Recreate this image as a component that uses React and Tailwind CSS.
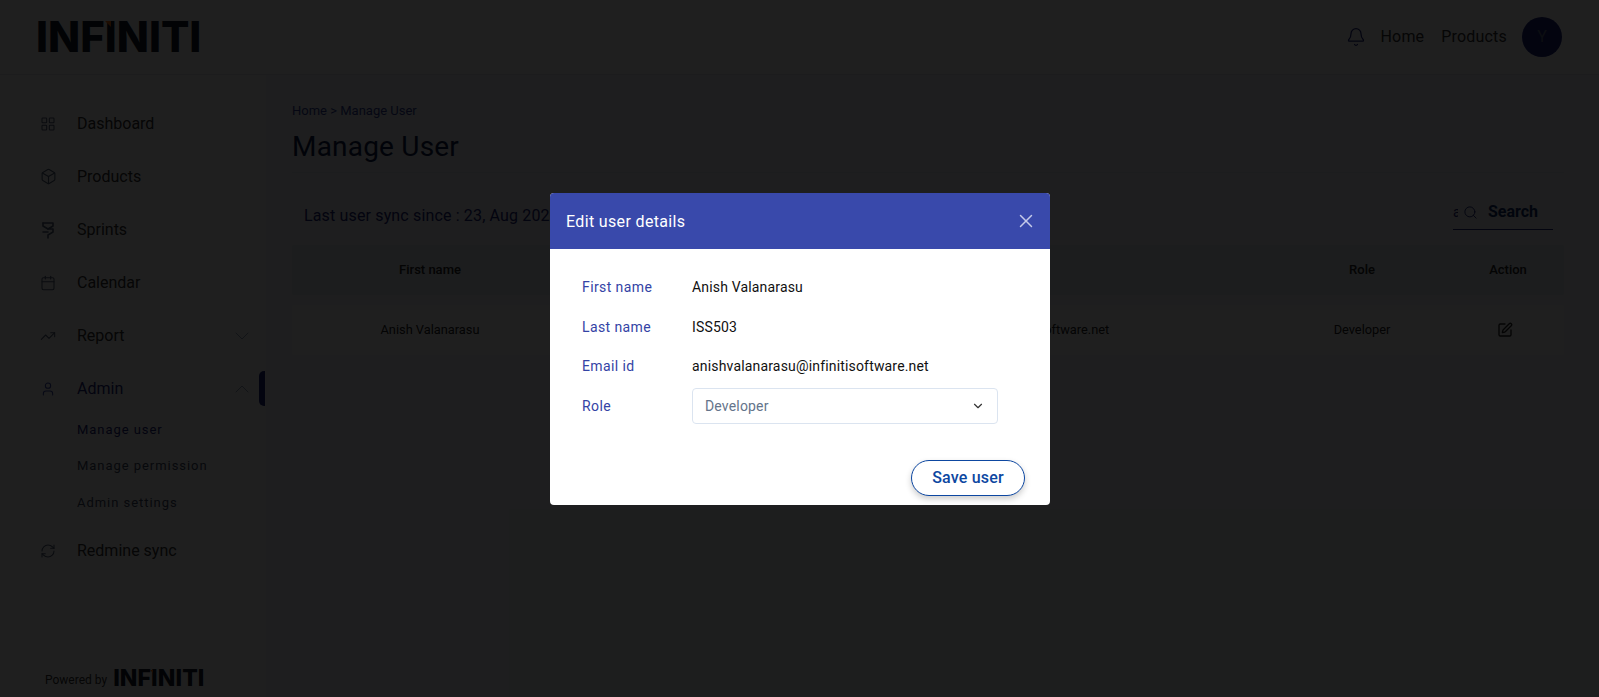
import React from "react";
import { LayoutGrid, Box, Calendar, TrendingUp, User, RefreshCw, Bell, Search, SquarePen, X, ChevronDown, ChevronUp } from "lucide-react";

function Logo({ small }) {
  return (
    <span className={small ? "relative inline-block font-['Inter',sans-serif] font-extrabold text-[23px] leading-[20px] tracking-[0.1px] text-[#101828]" : "relative inline-block font-['Inter',sans-serif] font-extrabold text-[42px] leading-[42px] tracking-[0px] text-[#101828]"}>
      INFINITI
      <span className={small ? "absolute left-[37px] top-[2px] h-0 w-0 border-l-[3px] border-t-[3px] border-l-transparent border-t-[#f97316]" : "absolute left-[69px] top-[5px] h-0 w-0 border-l-[6px] border-t-[6px] border-l-transparent border-t-[#f97316]"} />
    </span>
  );
}

function SprintIcon(props) {
  return (
    <svg width="16" height="18" viewBox="0 0 16 18" fill="none" stroke="currentColor" strokeWidth="1.4" strokeLinejoin="round" strokeLinecap="round" {...props}>
      <path d="M3 2h10v3l-5 3 5 0v3l-5 3v3" />
      <path d="M3 2v3l5 3" />
      <path d="M3 11h5" />
    </svg>
  );
}

function NavItem({ icon: Icon, label, active, chevron, size = 16 }) {
  return (
    <div className={`relative flex h-[53px] items-center pr-[12px] ${active ? "text-[#1a237e]" : "text-[#333333]"}`}>
      <span className="flex w-[61px] shrink-0 justify-center pl-[35px]">
        <span className="flex w-[26px] justify-center">
          <Icon size={size} strokeWidth={1.6} className={active ? "text-[#3949ab]" : "text-[#52607a]"} />
        </span>
      </span>
      <span className="ml-[16px] flex-1 text-[16px]">{label}</span>
      {chevron === "down" && <ChevronDown size={24} strokeWidth={1} className="text-[#94a3b8]" />}
      {chevron === "up" && <ChevronUp size={24} strokeWidth={1} className="text-[#94a3b8]" />}
      {active && <span className="absolute right-[1px] top-[9px] h-[35px] w-[6px] rounded-l-[5px] bg-[#1a237e]" />}
    </div>
  );
}

function SubItem({ label, active }) {
  return (
    <div className={`flex h-[36.5px] items-center pl-[77px] text-[13px] tracking-[0.95px] ${active ? "text-[#1a237e]" : "text-[#3f4a66]"}`}>
      {label}
    </div>
  );
}

function Row({ label, children }) {
  return (
    <div className="flex h-[39.5px] items-center">
      <div className="w-[110px] text-[14px] tracking-[0.4px] text-[#3443a5]">{label}</div>
      <div className="flex-1 text-[14px] tracking-[0.17px] text-[#111111]">{children}</div>
    </div>
  );
}

export default function App() {
  return (
    <div className="relative flex h-[697px] w-[1599px] flex-col overflow-hidden bg-white font-['Roboto',sans-serif]">
      <header className="flex h-[75px] shrink-0 items-center justify-between border-b border-[#e5e7eb] pl-[36px] pr-[37px]">
        <Logo />
        <div className="flex items-center">
          <Bell size={20} strokeWidth={1.5} className="text-[#1a237e]" />
          <span className="ml-[15px] text-[16px] tracking-[0.15px] text-[#333333]">Home</span>
          <span className="ml-[17px] text-[16px] tracking-[0.2px] text-[#333333]">Products</span>
          <span className="ml-[15px] flex h-[40px] w-[40px] items-center justify-center rounded-full bg-[#1a237e] text-[16px] text-[#64748b]">Y</span>
        </div>
      </header>

      <div className="flex min-h-0 flex-1">
        <aside className="relative flex w-[266px] shrink-0 flex-col pt-[22px]">
          <NavItem icon={LayoutGrid} label="Dashboard" />
          <NavItem icon={Box} label="Products" size={17} />
          <NavItem icon={SprintIcon} label="Sprints" />
          <NavItem icon={Calendar} label="Calendar" />
          <NavItem icon={TrendingUp} label="Report" chevron="down" />
          <NavItem icon={User} label="Admin" active chevron="up" />
          <div className="-mt-[4px]">
            <SubItem label="Manage user" active />
            <SubItem label="Manage permission" />
            <SubItem label="Admin settings" />
          </div>
          <div className="mt-[4px]">
            <NavItem icon={RefreshCw} label="Redmine sync" />
          </div>
          <div className="mt-auto mb-[9px] flex items-end pl-[45px]">
            <span className="text-[12px] leading-[16px] text-[#333333]">Powered by</span>
            <span className="ml-[6px] flex"><Logo small /></span>
          </div>
        </aside>

        <main className="min-w-0 flex-1 bg-[#f3f6f9] pl-[26px] pr-[35px] pt-[28px]">
          <div className="text-[13px] leading-[16px] text-[#303f9f]">Home &gt; Manage User</div>
          <h1 className="mt-[10px] border-b border-[#e2e8f0] pb-[7px] text-[28px] leading-[36px] tracking-[0.2px] text-[#0f1a4a]">Manage User</h1>
          <div className="mt-[22px] flex h-[35px] items-center justify-between pl-[12px] pr-[11px]">
            <span className="pt-[6px] text-[16px] tracking-[0.15px] text-[#1a237e]">Last user sync since : 23, Aug 2023</span>
            <div className="flex h-[35px] w-[100px] items-center border-b border-[#1a237e]">
              <span className="w-[5px] overflow-hidden text-[14px] text-[#1a237e]">a</span>
              <Search size={15} strokeWidth={1.5} className="ml-[5px] text-[#1a237e]" />
              <span className="ml-[10px] text-[16px] font-bold text-[#0d2a6b]">Search</span>
            </div>
          </div>
          <div className="mt-[15px] flex h-[50px] items-center rounded-[2px] bg-[#e4eaf2] text-center text-[13px] font-medium text-[#222222]">
            <div className="w-[276px]">First name</div>
            <div className="w-[250px]">Last name</div>
            <div className="w-[372px]">Email id</div>
            <div className="flex-1" />
            <div className="w-[180px]">Role</div>
            <div className="w-[112px]">Action</div>
          </div>
          <div className="mt-[10px] flex h-[50px] items-center rounded-[2px] bg-white text-center text-[12.8px] text-[#222222]">
            <div className="w-[276px]">Anish Valanarasu</div>
            <div className="w-[250px]">ISS503</div>
            <div className="w-[372px] whitespace-nowrap">anishvalanarasu@infinitisoftware.net</div>
            <div className="flex-1" />
            <div className="w-[180px]">Developer</div>
            <div className="flex w-[112px] justify-center pr-[6px]"><SquarePen size={16} strokeWidth={2} className="text-[#222222]" /></div>
          </div>
        </main>
      </div>

      <div className="absolute inset-0 bg-black/[.88]" />

      <div className="absolute left-[550px] top-[193px] flex h-[312px] w-[500px] flex-col overflow-hidden rounded-[4px] bg-white">
        <div className="flex h-[56px] shrink-0 items-center justify-between bg-[#3949ab] pl-[16px] pr-[13px]">
          <span className="pt-[1px] text-[16px] tracking-[0.35px] text-white">Edit user details</span>
          <X size={22} strokeWidth={1.6} className="text-[#c5cae9]" />
        </div>
        <div className="px-[32px] pt-[19px]">
          <Row label="First name">Anish Valanarasu</Row>
          <Row label="Last name">ISS503</Row>
          <Row label="Email id">anishvalanarasu@infinitisoftware.net</Row>
          <Row label="Role">
            <div className="flex h-[36px] w-[306px] items-center justify-between rounded-[4px] border border-[#dbe4f0] pl-[12px] pr-[12px] text-[#64748b]">
              <span>Developer</span>
              <ChevronDown size={14} strokeWidth={2} className="text-[#333333]" />
            </div>
          </Row>
        </div>
        <div className="mt-auto flex justify-end pb-[9px] pr-[25px]">
          <button className="h-[36px] w-[114px] rounded-full border border-[#0d47a1] bg-white text-[16px] font-medium tracking-[0.2px] text-[#0d47a1] shadow-[0_3px_6px_rgba(0,0,0,0.2)]">Save user</button>
        </div>
      </div>
    </div>
  );
}
